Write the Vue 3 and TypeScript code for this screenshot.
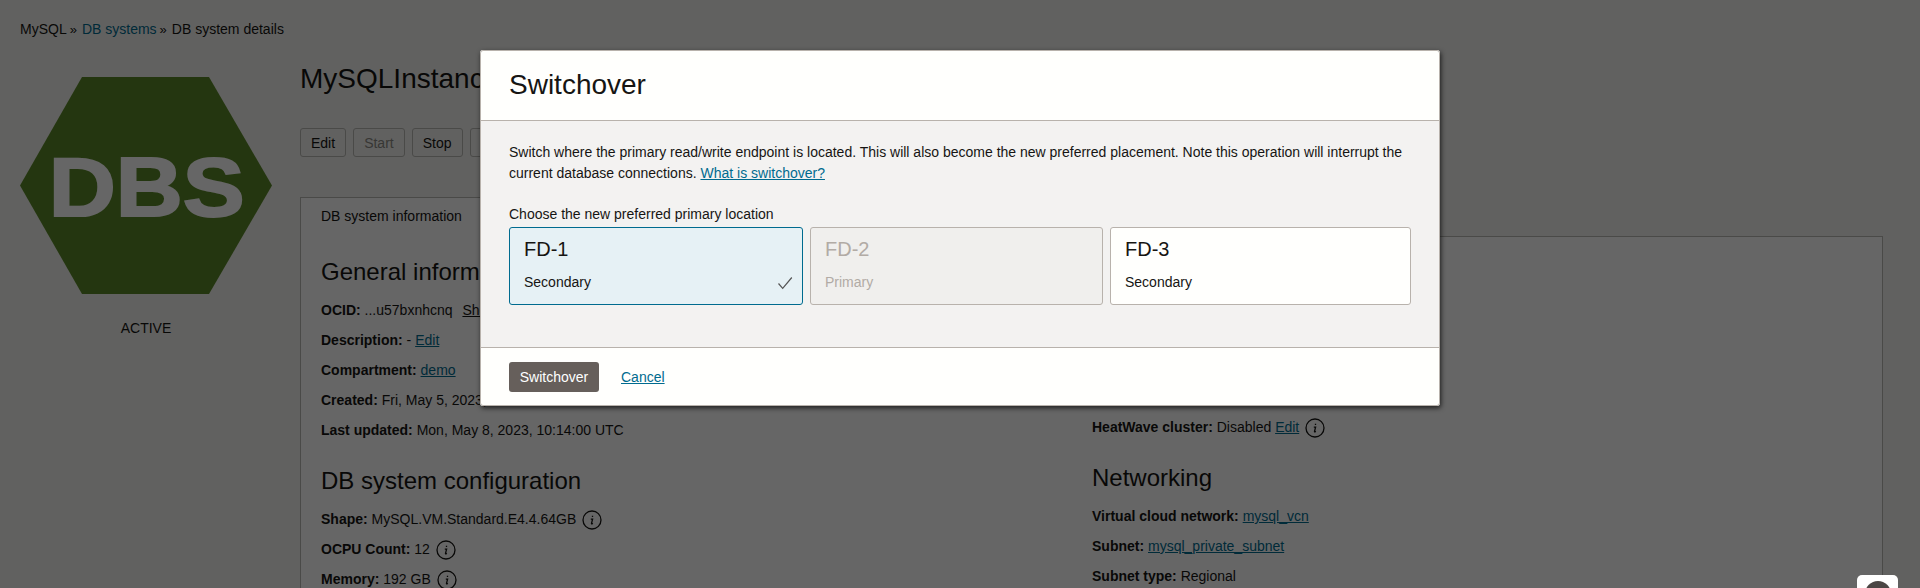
<script setup lang="ts">
interface Placement {
  name: string
  role: string
  state: 'selected' | 'disabled' | 'normal'
}

const placements: Placement[] = [
  { name: 'FD-1', role: 'Secondary', state: 'selected' },
  { name: 'FD-2', role: 'Primary', state: 'disabled' },
  { name: 'FD-3', role: 'Secondary', state: 'normal' },
]
</script>

<template>
  <div class="page">
    <nav class="crumbs">
      <span>MySQL</span><span class="sep">»</span>
      <a class="crumb-link">DB systems</a><span class="sep">»</span>
      <span>DB system details</span>
    </nav>

    <div class="main">
      <aside class="side">
        <svg class="hex" width="252" height="217" viewBox="0 0 252 217">
          <polygon points="62,0 189,0 252,108.500 189,217 62,217 0,108.500" fill="#5a8728" />
          <text x="126.700" y="139" text-anchor="middle" textLength="196" lengthAdjust="spacingAndGlyphs" class="hex-text">DBS</text>
        </svg>
        <div class="status">ACTIVE</div>
      </aside>

      <section class="content">
        <h1 class="title">MySQLInstance</h1>
        <div class="actions">
          <button class="btn">Edit</button>
          <button class="btn off">Start</button>
          <button class="btn">Stop</button>
          <button class="btn">Restart</button>
        </div>

        <div class="tab">DB system information</div>
        <div class="panel">
          <div class="col">
            <h2>General information</h2>
            <div class="row"><b>OCID:</b> ...u57bxnhcnq <a class="plain gap">Show</a></div>
            <div class="row"><b>Description:</b> - <a>Edit</a></div>
            <div class="row"><b>Compartment:</b> <a>demo</a></div>
            <div class="row"><b>Created:</b> Fri, May 5, 2023, 09:32:00 UTC</div>
            <div class="row"><b>Last updated:</b> Mon, May 8, 2023, 10:14:00 UTC</div>

            <h2 class="next">DB system configuration</h2>
            <div class="row">
              <b>Shape:</b> MySQL.VM.Standard.E4.4.64GB
              <svg class="info" width="20" height="20" viewBox="0 0 20 20">
                <circle cx="10" cy="10" r="9" />
                <path d="M8.800 9.200h1.800l-1.100 4.200q-.1.600.4.500l1-.5M10.500 5.800v1.200" />
              </svg>
            </div>
            <div class="row">
              <b>OCPU Count:</b> 12
              <svg class="info" width="20" height="20" viewBox="0 0 20 20">
                <circle cx="10" cy="10" r="9" />
                <path d="M8.800 9.200h1.800l-1.100 4.200q-.1.600.4.500l1-.5M10.500 5.800v1.200" />
              </svg>
            </div>
            <div class="row">
              <b>Memory:</b> 192 GB
              <svg class="info" width="20" height="20" viewBox="0 0 20 20">
                <circle cx="10" cy="10" r="9" />
                <path d="M8.800 9.200h1.800l-1.100 4.200q-.1.600.4.500l1-.5M10.500 5.800v1.200" />
              </svg>
            </div>
          </div>

          <div class="col right">
            <div class="row">
              <b>HeatWave cluster:</b> Disabled <a>Edit</a>
              <svg class="info after-link" width="20" height="20" viewBox="0 0 20 20">
                <circle cx="10" cy="10" r="9" />
                <path d="M8.800 9.200h1.800l-1.100 4.200q-.1.600.4.500l1-.5M10.500 5.800v1.200" />
              </svg>
            </div>
            <h2 class="next">Networking</h2>
            <div class="row"><b>Virtual cloud network:</b> <a>mysql_vcn</a></div>
            <div class="row"><b>Subnet:</b> <a>mysql_private_subnet</a></div>
            <div class="row"><b>Subnet type:</b> Regional</div>
          </div>
        </div>
      </section>
    </div>

    <div class="overlay">
      <div class="dialog" role="dialog" aria-label="Switchover">
        <header class="dialog-head">Switchover</header>

        <div class="dialog-body">
          <p class="intro">
            Switch where the primary read/write endpoint is located. This will also become the new preferred placement. Note this operation will interrupt the
            current database connections. <a class="link">What is switchover?</a>
          </p>
          <div class="choose">Choose the new preferred primary location</div>
          <div class="cards">
            <div v-for="p in placements" :key="p.name" class="card" :class="p.state">
              <div class="card-name">{{ p.name }}</div>
              <div class="card-role">{{ p.role }}</div>
              <svg v-if="p.state === 'selected'" class="check" width="16" height="13" viewBox="0 0 16 13">
                <path d="M1.500 6.500l4.200 4.800L14.800 0.500" />
              </svg>
            </div>
          </div>
        </div>

        <footer class="dialog-foot">
          <button class="primary">Switchover</button>
          <a class="link">Cancel</a>
        </footer>
      </div>
    </div>

    <div class="feedback" aria-hidden="true">
      <svg width="41" height="13" viewBox="0 0 41 13">
        <circle cx="21" cy="19" r="13" fill="#4a4644" />
        <path d="M8 14h26" stroke="#fff" stroke-width="2" />
      </svg>
    </div>
  </div>
</template>

<style>
html, body { margin: 0; overflow: hidden; }
</style>

<style scoped>
.page {
  position: relative;
  width: 1920px;
  height: 588px;
  overflow: hidden;
  box-sizing: border-box;
  padding: 19px 0 0 20px;
  background: #f3f3ef;
  color: #161513;
  font: 14px/20px "Liberation Sans", Arial, sans-serif;
}
a { color: #006b8f; text-decoration: underline; }
.crumbs { height: 20px; }
.crumb-link { text-decoration: none; }
.sep { margin: 0 5px 0 3px; font-size: 13px; }

.main { display: flex; margin-top: 23px; }
.side { width: 252px; flex: none; padding-top: 15px; text-align: center; }
.hex { display: block; }
.hex-text {
  font: bold 84px "Liberation Sans", Arial, sans-serif;
  fill: #fff;
  stroke: #fff;
  stroke-width: 2px;
}
.status { margin-top: 24px; }

.content { width: 1583px; margin-left: 28px; }
.title { margin: 0; font-size: 28px; font-weight: 400; line-height: 34px; }
.actions { display: flex; gap: 7px; margin-top: 32px; }
.btn {
  height: 29px;
  padding: 0 10px;
  border: 1px solid #b8b8b4;
  border-radius: 3px;
  background: #f3f3ef;
  color: #161513;
  font: inherit;
}
.btn.off { color: #8b8a85; }

.tab {
  position: relative;
  z-index: 1;
  width: 200px;
  height: 40px;
  box-sizing: border-box;
  margin: 40px 0 -1px;
  padding: 8px 0 0 20px;
  border: 1px solid #b8b8b4;
  border-bottom: 0;
  background: #fff;
}
.panel {
  display: grid;
  grid-template-columns: 771px 1fr;
  height: 400px;
  box-sizing: border-box;
  padding: 20px 20px 0;
  border: 1px solid #b8b8b4;
  background: #fff;
}
h2 { margin: 0 0 8px; font-size: 24px; font-weight: 400; line-height: 30px; }
h2.next { margin-top: 21px; }
.row { height: 30px; line-height: 30px; white-space: nowrap; }
.right { padding-top: 155px; }
.gap { margin-left: 6px; }
.plain { color: #161513; }
.info { margin-left: 2px; vertical-align: middle; }
.info.after-link { margin-left: 6px; }
.info circle { fill: none; stroke: #161513; stroke-width: 1.300; }
.info path { fill: none; stroke: #161513; stroke-width: 1.300; }

.overlay { position: absolute; z-index: 2; inset: 0; background: rgba(0, 0, 0, 0.6); }
.dialog {
  position: absolute;
  top: 50px;
  left: 480px;
  display: flex;
  flex-direction: column;
  width: 960px;
  height: 356px;
  border-radius: 3px;
  overflow: hidden;
  background: #fffffd;
  box-shadow: 1px 2px 5px rgba(0, 0, 0, 0.7);
  outline: 1px solid #b8b2ac;
  outline-offset: -1px;
}
.dialog-head {
  flex: none;
  height: 70px;
  padding: 0 29px;
  font-size: 28px;
  line-height: 70px;
  border-bottom: 1px solid #b8b2ac;
}
.dialog-body { flex: 1; padding: 21px 29px 0; background: #f3f2f1; }
.intro { margin: 0; line-height: 21px; }
.link { color: #006b8f; }
.choose { margin-top: 21px; line-height: 18px; }
.cards { display: grid; grid-template-columns: 294px 293px 301px; gap: 7px; margin-top: 4px; }
.card {
  position: relative;
  height: 78px;
  box-sizing: border-box;
  padding: 9px 14px 0;
  border: 1px solid #b8b2ac;
  border-radius: 3px;
  background: #fffffd;
}
.card.selected { border-color: #006b8f; background: #e6f1f5; }
.card.disabled { background: #f0efed; color: #b2aba5; }
.card-name { font-size: 20px; line-height: 24px; }
.card-role { margin-top: 11px; line-height: 20px; }
.check { position: absolute; right: 9px; bottom: 14px; }
.check path { fill: none; stroke: #555; stroke-width: 1.200; }
.dialog-foot {
  display: flex;
  flex: none;
  align-items: center;
  gap: 22px;
  height: 59px;
  box-sizing: border-box;
  padding: 0 29px;
  border-top: 1px solid #b8b2ac;
}
.primary {
  width: 90px;
  height: 30px;
  padding: 0;
  border: 0;
  border-radius: 3px;
  background: #665f5b;
  color: #fff;
  font: inherit;
}
.feedback {
  position: absolute;
  z-index: 3;
  left: 1857px;
  bottom: 0;
  width: 41px;
  height: 13px;
  overflow: hidden;
  border-radius: 5px 5px 0 0;
  background: #fff;
}
.feedback svg { display: block; }
</style>
